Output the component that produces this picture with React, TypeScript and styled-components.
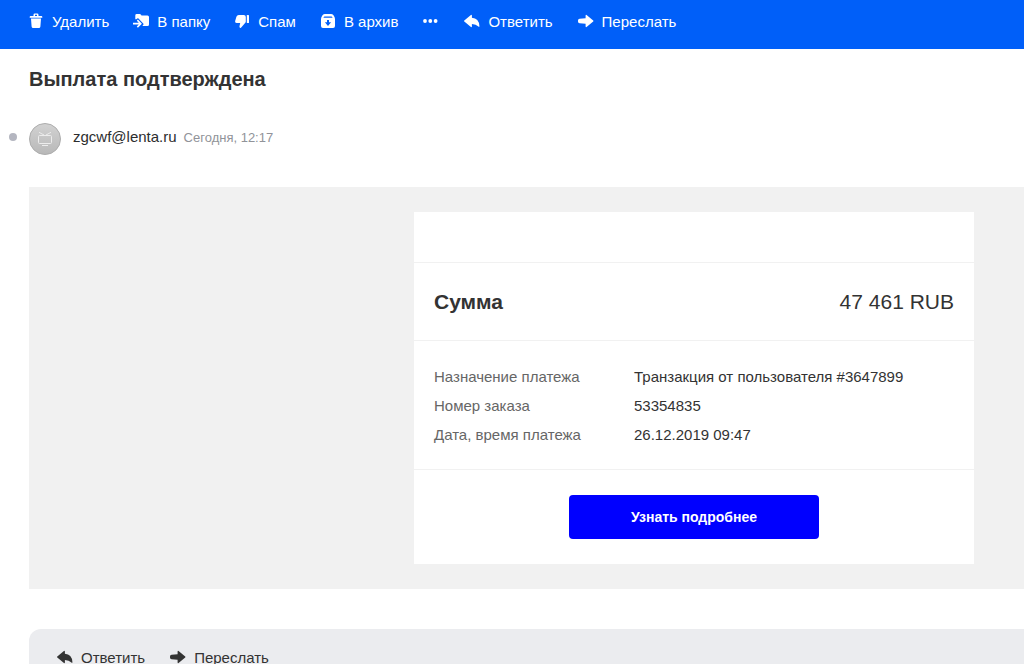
import React from "react";
import styled, { createGlobalStyle } from "styled-components";

const GlobalStyle = createGlobalStyle`
  *, *::before, *::after { box-sizing: border-box; }
  body {
    margin: 0;
    background: #ffffff;
    color: #333333;
    font-family: Arial, "Liberation Sans", sans-serif;
    font-size: 15px;
  }
`;

const Page = styled.div`
  display: flex;
  flex-direction: column;
  height: 100vh;
  overflow: hidden;
`;

const Toolbar = styled.header`
  display: flex;
  flex-shrink: 0;
  gap: 26px;
  padding: 0 28px 7px;
  background: #005ff9;
  color: #ffffff;
`;

const ActionGroup = styled.div<{ $gap: number }>`
  display: flex;
  gap: ${({ $gap }) => $gap}px;
`;

const ActionButton = styled.button`
  display: flex;
  align-items: center;
  gap: 8px;
  height: 42px;
  padding: 0;
  border: 0;
  background: none;
  color: inherit;
  font: inherit;
  white-space: nowrap;
  cursor: pointer;
`;

const Icon = styled.svg`
  display: block;
  width: 16px;
  height: 16px;
  flex-shrink: 0;
  fill: currentColor;
`;

const Letter = styled.main`
  flex: 1;
  padding-left: 29px;
`;

const Subject = styled.h1`
  margin: 18px 0 32px;
  font-size: 20px;
  line-height: 24px;
`;

const Author = styled.div`
  position: relative;
  display: flex;
  gap: 12px;
  height: 32px;
`;

const AuthorInfo = styled.div`
  display: flex;
  align-items: baseline;
  gap: 7px;
  line-height: 28px;
`;

const ReadMark = styled.span`
  position: absolute;
  left: -20px;
  top: 10px;
  width: 8px;
  height: 8px;
  border-radius: 50%;
  background: #b4b6c0;
`;

const Avatar = styled.svg`
  width: 32px;
  height: 32px;
`;

const Sender = styled.span`
  color: #2c2d2e;
`;

const SentAt = styled.time`
  color: #919399;
  font-size: 13px;
`;

const MailBody = styled.section`
  display: flex;
  justify-content: flex-end;
  margin-top: 32px;
  padding: 25px 50px 25px 0;
  background: #f1f1f1;
`;

const Card = styled.article`
  width: 100%;
  max-width: 560px;
  background: #ffffff;
`;

const CardHead = styled.div`
  height: 50px;
`;

const Total = styled.div`
  display: flex;
  align-items: center;
  justify-content: space-between;
  height: 78px;
  padding: 0 20px;
  border-top: 1px solid #f1f1f1;
  font-size: 21px;
`;

const TotalLabel = styled.h2`
  margin: 0;
  font-size: 21px;
`;

const DetailsSection = styled.div`
  padding: 21px 20px 20px;
  border-top: 1px solid #f1f1f1;
  border-bottom: 1px solid #f1f1f1;
`;

const Details = styled.table`
  width: 100%;
  border-collapse: collapse;
  table-layout: fixed;
  font-size: 15px;

  th, td {
    height: 29px;
    padding: 0;
    text-align: left;
    font-weight: normal;
  }
  th {
    width: 200px;
    color: #666666;
  }
`;

const CardFooter = styled.div`
  display: flex;
  justify-content: center;
  padding: 25px 20px;
`;

const MoreLink = styled.a`
  width: 250px;
  border-radius: 4px;
  background: #0000ff;
  color: #ffffff;
  font-size: 14px;
  font-weight: bold;
  line-height: 44px;
  text-align: center;
  text-decoration: none;
`;

const ReplyBar = styled.footer`
  margin-top: 40px;
  padding: 7px 28px;
  border-radius: 12px 0 0 12px;
  background: #ebecef;
  color: #333333;
`;

const TrashIcon = () => (
  <Icon viewBox="0 0 16 16" aria-hidden="true">
    <path
      fillRule="evenodd"
      d="M5.500 3V1.800Q5.500.4 6.900.4h2.200q1.400 0 1.400 1.400V3h2.900q.9 0 .9.900v.9H1.700v-.9q0-.9.900-.9zM7 3h2V1.800H7z"
    />
    <path d="M3 5.600h10l-.6 7.800q-.1 1.600-1.600 1.600H5.200q-1.500 0-1.600-1.600z" />
  </Icon>
);

const FolderIcon = () => (
  <Icon viewBox="0 0 16 16" aria-hidden="true">
    <path d="M2.300 6.200V2.400Q2.300 1 3.700 1h3q.9 0 1.300.8l.5.700h6q1.500 0 1.500 1.500v7.500q0 1.500-1.500 1.500H9.400l1.300-2-5.200-5.500q-.6-.6-1.300 0l-.9.700z" />
    <path d="M3.800 7.700l1.100-1.100 4 4.100-4 4-1.100-1.100 2-2H0V9.700h5.800z" />
  </Icon>
);

const ThumbDownIcon = () => (
  <Icon viewBox="0 0 16 16" aria-hidden="true">
    <path d="M4.800 2h5q2 0 2 2v4.500q0 .8-.5 1.300l-4.100 4.800q-.6.700-1.300.1-.6-.5-.4-1.400L6.200 10H2.600Q.8 10 1.100 8.300l1.300-4.500Q3 2 4.800 2z" />
    <rect x="12.800" y="2" width="2.200" height="8" rx=".6" />
  </Icon>
);

const ArchiveIcon = () => (
  <Icon viewBox="0 0 16 16" aria-hidden="true">
    <path
      fillRule="evenodd"
      d="M5 1h6q1.500 0 2.500 1.300Q15 4.200 15 6v7q0 2-2 2H3q-2 0-2-2V6q0-1.800 1.500-3.700Q3.500 1 5 1zM4.400 3.400L3.300 4.800h9.400l-1.100-1.400zM7 7v2.300H4.900L8 13l3.100-3.700H9V7z"
    />
  </Icon>
);

const DotsIcon = () => (
  <Icon viewBox="0 0 16 16" aria-hidden="true">
    <circle cx="3" cy="8" r="1.900" />
    <circle cx="8.300" cy="8" r="1.900" />
    <circle cx="13.600" cy="8" r="1.900" />
  </Icon>
);

const ReplyIcon = () => (
  <Icon viewBox="0 0 16 16" aria-hidden="true">
    <path d="M.3 7.500l6.300-5.300q1.300-1 1.300.6v2q7 .5 7.500 8.200 0 1.500-1 .5-2.400-2.600-6.500-2.600v2.300q0 1.600-1.300.6L.3 8.500q-.6-.5 0-1z" />
  </Icon>
);

const ForwardIcon = () => (
  <Icon viewBox="0 0 16 16" aria-hidden="true">
    <path d="M15.200 7.500L8.900 2.200q-1.300-1-1.300.6v2.400l-6 .5Q0 5.900 0 7.400v1.200q0 1.500 1.600 1.700l6 .5v2.400q0 1.600 1.300.6l6.300-5.300q.6-.5 0-1z" />
  </Icon>
);

const SenderAvatar = () => (
  <Avatar viewBox="0 0 32 32" aria-hidden="true">
    <defs>
      <linearGradient id="avatar-fill" x1="0" y1="0" x2="0" y2="1">
        <stop offset="0" stopColor="#d2d2d2" />
        <stop offset="1" stopColor="#b8b8b8" />
      </linearGradient>
    </defs>
    <circle cx="16" cy="16" r="15.500" fill="url(#avatar-fill)" stroke="#adadad" />
    <g fill="none" stroke="#ececec">
      <rect x="9.500" y="12.500" width="13" height="8" rx="1" />
      <path d="M10 9.300l5 2.700M22 9.300l-5 2.700M13 22.500h6" />
    </g>
  </Avatar>
);

const folderActions = [
  { label: "Удалить", icon: <TrashIcon /> },
  { label: "В папку", icon: <FolderIcon /> },
  { label: "Спам", icon: <ThumbDownIcon /> },
  { label: "В архив", icon: <ArchiveIcon /> },
];

const replyActions = [
  { label: "Ответить", icon: <ReplyIcon /> },
  { label: "Переслать", icon: <ForwardIcon /> },
];

const details = [
  ["Назначение платежа", "Транзакция от пользователя #3647899"],
  ["Номер заказа", "53354835"],
  ["Дата, время платежа", "26.12.2019 09:47"],
];

type Action = { label: string; icon: React.ReactNode };

const Actions = ({ items }: { items: Action[] }) => (
  <>
    {items.map(({ label, icon }) => (
      <ActionButton key={label} type="button">
        {icon}
        {label}
      </ActionButton>
    ))}
  </>
);

export default function App() {
  return (
    <Page>
      <GlobalStyle />
      <Toolbar>
        <ActionGroup $gap={24}>
          <Actions items={folderActions} />
          <ActionButton type="button" aria-label="Ещё">
            <DotsIcon />
          </ActionButton>
        </ActionGroup>
        <ActionGroup $gap={25}>
          <Actions items={replyActions} />
        </ActionGroup>
      </Toolbar>
      <Letter>
        <Subject>Выплата подтверждена</Subject>
        <Author>
          <ReadMark />
          <SenderAvatar />
          <AuthorInfo>
            <Sender>zgcwf@lenta.ru</Sender>
            <SentAt>Сегодня, 12:17</SentAt>
          </AuthorInfo>
        </Author>
        <MailBody>
          <Card>
            <CardHead />
            <Total>
              <TotalLabel>Сумма</TotalLabel>
              <span>47 461 RUB</span>
            </Total>
            <DetailsSection>
              <Details>
                <tbody>
                  {details.map(([name, value]) => (
                    <tr key={name}>
                      <th scope="row">{name}</th>
                      <td>{value}</td>
                    </tr>
                  ))}
                </tbody>
              </Details>
            </DetailsSection>
            <CardFooter>
              <MoreLink href="#">Узнать подробнее</MoreLink>
            </CardFooter>
          </Card>
        </MailBody>
        <ReplyBar>
          <ActionGroup $gap={25}>
            <Actions items={replyActions} />
          </ActionGroup>
        </ReplyBar>
      </Letter>
    </Page>
  );
}
